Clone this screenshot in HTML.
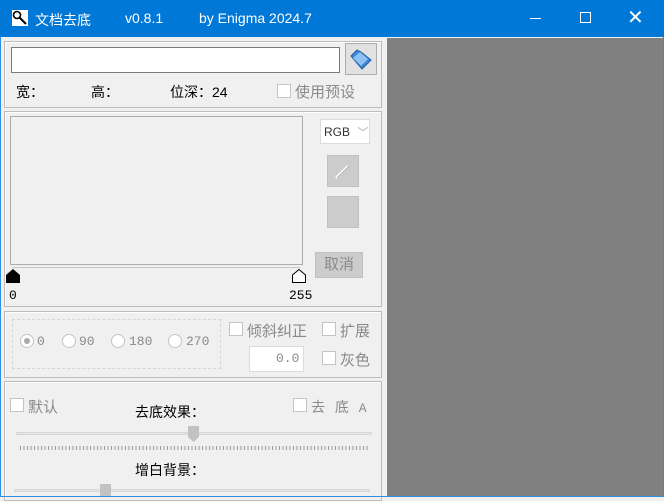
<!DOCTYPE html><html><head><style>
*{margin:0;padding:0;box-sizing:border-box}
body{width:664px;height:497px;background:#f0f0f0;font-family:"Liberation Sans","Noto Sans CJK SC",sans-serif;font-size:14px;color:#000;position:relative;overflow:hidden}
.a{position:absolute}
.t{background:#0078d7;left:0;top:0;width:664px;height:37px;color:#fff}
.g{border:1px solid #bcbcbc;box-shadow:inset 1px 1px 0 #fff}
.cb{width:14px;height:14px;border:1px solid #c4c4c4;background:#fff}
.dis{color:#8a8a8a}
.mono{font-family:"Liberation Mono","Noto Sans CJK SC",monospace;font-size:13px}
.rad{width:14px;height:14px;border:1px solid #c4c4c4;border-radius:50%;background:#fff}
</style></head><body>
<div class="a t">
<svg class="a" style="left:12px;top:10px" width="16" height="16"><rect width="16" height="16" fill="#fff"/><circle cx="5" cy="5" r="3.5" fill="none" stroke="#000" stroke-width="1.6"/><path d="M7.5 7.5L14 14" stroke="#000" stroke-width="2"/></svg>
<div class="a" style="left:35px;top:10px;font-size:14px">文档去底</div>
<div class="a" style="left:125px;top:10px;font-size:14px">v0.8.1</div>
<div class="a" style="left:199px;top:10px;font-size:14px">by Enigma 2024.7</div>
<div class="a" style="left:530px;top:18px;width:11px;height:1px;background:#fff"></div>
<div class="a" style="left:580px;top:12px;width:11px;height:11px;border:1px solid #fff"></div>
<div class="a" style="left:627px;top:5px;font-size:20px">✕</div>
</div>
<div class="a" style="left:0;top:37px;width:1px;height:460px;background:#2f8ee0"></div>
<div class="a" style="left:663px;top:37px;width:1px;height:460px;background:#2f8ee0"></div>
<div class="a" style="left:387px;top:38px;width:276px;height:459px;background:#808080"></div>

<div class="a g" style="left:4px;top:41px;width:378px;height:67px"></div>
<div class="a" style="left:11px;top:47px;width:329px;height:26px;border:1px solid #7a7a7a;background:#fff"></div>
<div class="a" style="left:345px;top:43px;width:32px;height:32px;background:#e1e1e1;border:1px solid #adadad"></div>
<svg class="a" style="left:348px;top:46px" width="26" height="26"><path d="M3 10L9 4L13 6L23 14L14 23Z" fill="#3f86d6" stroke="#1d5fa8"/><path d="M5 12L12 6L20 13L13 20Z" fill="#8cc1f2"/></svg>
<div class="a" style="left:16px;top:82px">宽：</div>
<div class="a" style="left:91px;top:82px">高：</div>
<div class="a" style="left:170px;top:82px">位深：24</div>
<div class="a cb" style="left:277px;top:84px"></div>
<div class="a dis" style="left:295px;top:81px;font-size:15px">使用预设</div>

<div class="a g" style="left:4px;top:111px;width:378px;height:196px"></div>
<div class="a" style="left:10px;top:116px;width:293px;height:149px;border:1px solid #adadad"></div>
<div class="a" style="left:12px;top:267px;width:288px;height:1px;background:#c8c8c8"></div>
<svg class="a" style="left:5px;top:268px" width="16" height="16"><path d="M1 15V7L8 1L15 7V15Z" fill="#000"/></svg>
<svg class="a" style="left:291px;top:268px" width="16" height="16"><path d="M1.5 14.5V7L8 1.5L14.5 7V14.5Z" fill="#fff" stroke="#000"/></svg>
<div class="a mono" style="left:9px;top:288px">0</div>
<div class="a mono" style="left:289px;top:288px">255</div>
<div class="a" style="left:320px;top:119px;width:50px;height:25px;background:#fff;border:1px solid #dcdcdc;font-size:12px;padding:4px 0 0 3px;color:#333">RGB <span style="color:#aaa;font-size:11px;margin-left:4px">﹀</span></div>
<div class="a" style="left:327px;top:155px;width:32px;height:32px;background:#cccccc;border:1px solid #c0c0c0"></div>
<svg class="a" style="left:333px;top:161px" width="20" height="20"><path d="M3 17L15 5" stroke="#fff" stroke-width="2.5"/><path d="M4 17L16 5" stroke="#999" stroke-width="0.8"/></svg>
<div class="a" style="left:327px;top:196px;width:32px;height:32px;background:#cccccc;border:1px solid #c0c0c0"></div>
<div class="a" style="left:315px;top:252px;width:48px;height:26px;background:#cccccc;border:1px solid #c0c0c0;color:#8a8a8a;font-size:15px;text-align:center;line-height:24px">取消</div>

<div class="a g" style="left:4px;top:311px;width:378px;height:67px"></div>
<div class="a" style="left:12px;top:319px;width:209px;height:50px;border:1px dashed #d6d6d6"></div>
<div class="a rad" style="left:20px;top:334px"><div class="a" style="left:3px;top:3px;width:6px;height:6px;border-radius:50%;background:#aaa"></div></div>
<div class="a mono dis" style="left:37px;top:334px">0</div>
<div class="a rad" style="left:62px;top:334px"></div><div class="a mono dis" style="left:79px;top:334px">90</div>
<div class="a rad" style="left:111px;top:334px"></div><div class="a mono dis" style="left:129px;top:334px">180</div>
<div class="a rad" style="left:168px;top:334px"></div><div class="a mono dis" style="left:186px;top:334px">270</div>
<div class="a cb" style="left:229px;top:322px"></div><div class="a dis" style="left:247px;top:320px;font-size:15px">倾斜纠正</div>
<div class="a cb" style="left:322px;top:322px"></div><div class="a dis" style="left:340px;top:320px;font-size:15px">扩展</div>
<div class="a" style="left:249px;top:346px;width:55px;height:26px;background:#fff;border:1px solid #dcdcdc"></div>
<div class="a mono dis" style="left:276px;top:351px">0.0</div>
<div class="a cb" style="left:322px;top:351px"></div><div class="a dis" style="left:340px;top:349px;font-size:15px">灰色</div>

<div class="a g" style="left:4px;top:381px;width:378px;height:120px"></div>
<div class="a cb" style="left:10px;top:398px"></div><div class="a dis" style="left:28px;top:396px;font-size:15px">默认</div>
<div class="a" style="left:135px;top:402px">去底效果：</div>
<div class="a cb" style="left:293px;top:398px"></div><div class="a dis" style="left:311px;top:397px;font-size:14px;letter-spacing:3px">去 底 <span class="mono">A</span></div>
<div class="a" style="left:16px;top:432px;width:356px;height:3px;border:1px solid #d6d6d6;background:#e7e7e7"></div>
<svg class="a" style="left:188px;top:426px" width="12" height="17"><path d="M0 0H11V11L5.5 16L0 11Z" fill="#c2c2c2"/></svg>
<div class="a" style="left:20px;top:446px;width:349px;height:4px;background:repeating-linear-gradient(90deg,#9a9a9a 0 1px,transparent 1px 3.5px)"></div>
<div class="a" style="left:135px;top:460px">增白背景：</div>
<div class="a" style="left:14px;top:489px;width:356px;height:3px;border:1px solid #d6d6d6;background:#e7e7e7"></div>
<div class="a" style="left:100px;top:484px;width:11px;height:12px;background:#c2c2c2"></div>
<div class="a" style="left:0;top:496px;width:664px;height:1px;background:#2f8ee0"></div>
</body></html>
